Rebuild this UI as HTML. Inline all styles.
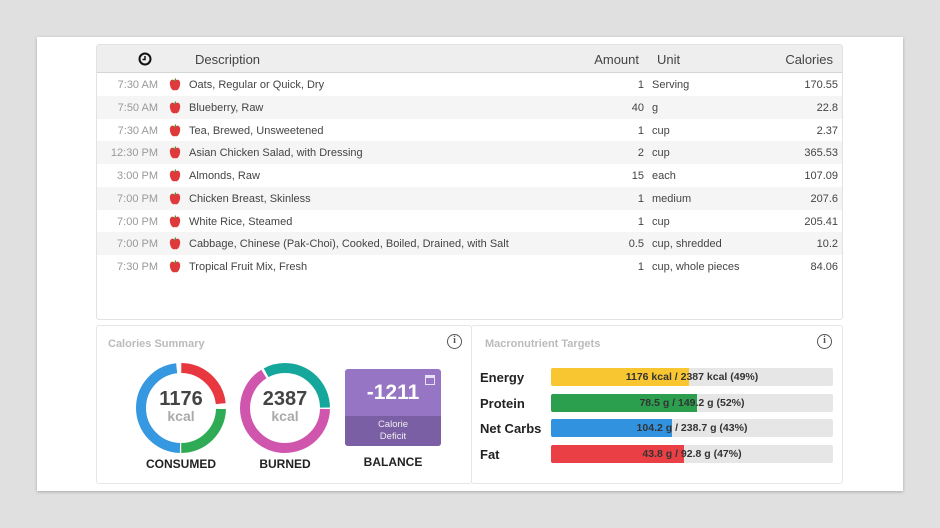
<!DOCTYPE html>
<html><head><meta charset="utf-8"><style>
*{margin:0;padding:0;box-sizing:border-box}
body{width:940px;height:528px;background:#e0e0e0;font-family:"Liberation Sans",sans-serif;position:relative;overflow:hidden}
.card{position:absolute;left:37px;top:37px;width:866px;height:454px;background:#fff;box-shadow:0 1px 3px rgba(0,0,0,.25)}
.tbl{position:absolute;left:96px;top:44px;width:747px;height:276px;border:1px solid #e2e2e2;border-radius:3px;background:#fff}
.hdr{position:absolute;left:0;top:0;width:745px;height:28px;background:#eeeeee;border-bottom:1px solid #d5d5d5;font-size:13px;color:#444}
.hdr span,.row span{position:absolute;white-space:nowrap}
.row{position:absolute;left:0;width:745px;height:23px;font-size:11px;color:#444}
.t{left:0;width:61px;text-align:right;color:#999;top:6px}
.ap{position:absolute;left:72px;top:5px;width:12px;height:13px}
.d{left:92px;top:6px}
.a{left:500px;width:47px;text-align:right;top:6px}
.u{left:555px;top:6px}
.c{right:4px;top:6px}
.panel{position:absolute;top:325px;height:159px;border:1px solid #e6e6e6;border-radius:3px;background:#fff}
.ptitle{position:absolute;left:11px;top:12px;font-size:11px;font-weight:bold;color:#bbb}
.info{position:absolute;top:8px;width:15px;height:15px;border:1.3px solid #555;border-radius:50%;font-size:10px;text-align:center;line-height:12px;color:#555;font-family:"Liberation Serif",serif;font-weight:bold}
.lbl{position:absolute;font-size:12px;font-weight:bold;color:#222;text-align:center}
.bar{position:absolute;left:551px;width:282px;height:18px;background:#e6e6e6;border-radius:2px;overflow:hidden}
.bar i{position:absolute;left:0;top:0;height:18px}
.bar b{position:absolute;left:0;width:100%;top:3px;text-align:center;font-size:10.5px;color:#333}
.ml{position:absolute;left:480px;font-size:13px;font-weight:bold;color:#222}
</style></head><body>
<div class="card"></div>
<div class="tbl">
<div class="hdr">
<svg style="position:absolute;left:41px;top:7px" width="14" height="14" viewBox="0 0 14 14"><circle cx="7" cy="7" r="5.5" fill="none" stroke="#111" stroke-width="2"/><path d="M7 4V7.5H4.5" fill="none" stroke="#111" stroke-width="1.5"/></svg>
<span style="left:98px;top:7px">Description</span>
<span style="right:203px;top:7px">Amount</span>
<span style="left:560px;top:7px">Unit</span>
<span style="right:9px;top:7px">Calories</span>
</div>
<div id="rows" style="position:absolute;top:28px;left:0;width:745px"></div>
</div>
<div class="panel" style="left:96px;width:376px">
<div class="ptitle">Calories Summary</div><div class="info" style="left:350px">i</div>
</div>
<div class="panel" style="left:471px;width:372px">
<div class="ptitle" style="left:13px">Macronutrient Targets</div><div class="info" style="left:345px">i</div>
</div>
<svg style="position:absolute;left:136px;top:363px" width="90" height="90" viewBox="0 0 90 90">
<g fill="none" stroke-width="10">
<circle cx="45" cy="45" r="40" stroke="#e8373f" stroke-dasharray="58 400" stroke-dashoffset="-188.5"/>
<circle cx="45" cy="45" r="40" stroke="#2faa55" stroke-dasharray="61.5 400" stroke-dashoffset="-1"/>
<circle cx="45" cy="45" r="40" stroke="#3598e0" stroke-dasharray="120 400" stroke-dashoffset="-63.8"/>
</g></svg>
<svg style="position:absolute;left:240px;top:363px" width="90" height="90" viewBox="0 0 90 90">
<g fill="none" stroke-width="10">
<circle cx="45" cy="45" r="40" stroke="#16a79c" stroke-dasharray="82 400" stroke-dashoffset="-168.5"/>
<circle cx="45" cy="45" r="40" stroke="#cf55ad" stroke-dasharray="165 400" stroke-dashoffset="-1"/>
</g></svg>
<div class="lbl" style="left:136px;width:90px;top:388px;font-size:20px;color:#444">1176</div>
<div class="lbl" style="left:136px;width:90px;top:408px;font-size:14px;color:#aaa">kcal</div>
<div class="lbl" style="left:240px;width:90px;top:388px;font-size:20px;color:#444">2387</div>
<div class="lbl" style="left:240px;width:90px;top:408px;font-size:14px;color:#aaa">kcal</div>
<div class="lbl" style="left:126px;width:110px;top:457px">CONSUMED</div>
<div class="lbl" style="left:240px;width:90px;top:457px">BURNED</div>
<div style="position:absolute;left:345px;top:369px;width:96px;height:77px;background:#9575c4;border-radius:3px;overflow:hidden">
<div style="position:absolute;top:12px;width:100%;text-align:center;color:#fff;font-weight:bold;font-size:21px">-1211</div>
<div style="position:absolute;right:6px;top:6px;width:10px;height:10px;border:1.5px solid #e8e0f5;border-top-width:3px"></div>
<div style="position:absolute;left:0;top:47px;width:100%;height:30px;background:#7a5fa4;color:#eee;font-size:9.5px;text-align:center;line-height:12px;padding-top:3px">Calorie<br>Deficit</div>
</div>
<div class="lbl" style="left:345px;width:96px;top:455px">BALANCE</div>
<div class="ml" style="top:370px">Energy</div>
<div class="ml" style="top:396px">Protein</div>
<div class="ml" style="top:421px">Net Carbs</div>
<div class="ml" style="top:447px">Fat</div>
<div class="bar" style="top:368px"><i style="width:138px;background:#f8c630"></i><b>1176 kcal / 2387 kcal (49%)</b></div>
<div class="bar" style="top:394px"><i style="width:146px;background:#2b9f4e"></i><b>78.5 g / 149.2 g (52%)</b></div>
<div class="bar" style="top:419px"><i style="width:121px;background:#3193e0"></i><b>104.2 g / 238.7 g (43%)</b></div>
<div class="bar" style="top:445px"><i style="width:133px;background:#ea4045"></i><b>43.8 g / 92.8 g (47%)</b></div>
<script>
var rows=[["7:30 AM","Oats, Regular or Quick, Dry","1","Serving","170.55"],["7:50 AM","Blueberry, Raw","40","g","22.8"],["7:30 AM","Tea, Brewed, Unsweetened","1","cup","2.37"],["12:30 PM","Asian Chicken Salad, with Dressing","2","cup","365.53"],["3:00 PM","Almonds, Raw","15","each","107.09"],["7:00 PM","Chicken Breast, Skinless","1","medium","207.6"],["7:00 PM","White Rice, Steamed","1","cup","205.41"],["7:00 PM","Cabbage, Chinese (Pak-Choi), Cooked, Boiled, Drained, with Salt","0.5","cup, shredded","10.2"],["7:30 PM","Tropical Fruit Mix, Fresh","1","cup, whole pieces","84.06"]];
var h='';
for(var i=0;i<rows.length;i++){var r=rows[i];
h+='<div class="row" style="top:'+(i*22.75)+'px;background:'+(i%2?'#f5f5f5':'#fff')+'"><span class="t">'+r[0]+'</span><svg class="ap" viewBox="0 0 12 13"><path d="M6 3C3-0.5 0 3 1 7c1 5 3.5 6 5 5 1.5 1 4 0 5-5 1-4-2-7.5-5-4z" fill="#e0393b"/><path d="M6 3.5L6.5 0.5" stroke="#4a8a2a" stroke-width="1.2"/></svg><span class="d">'+r[1]+'</span><span class="a">'+r[2]+'</span><span class="u">'+r[3]+'</span><span class="c">'+r[4]+'</span></div>';}
document.getElementById('rows').innerHTML=h;
</script>
</body></html>
